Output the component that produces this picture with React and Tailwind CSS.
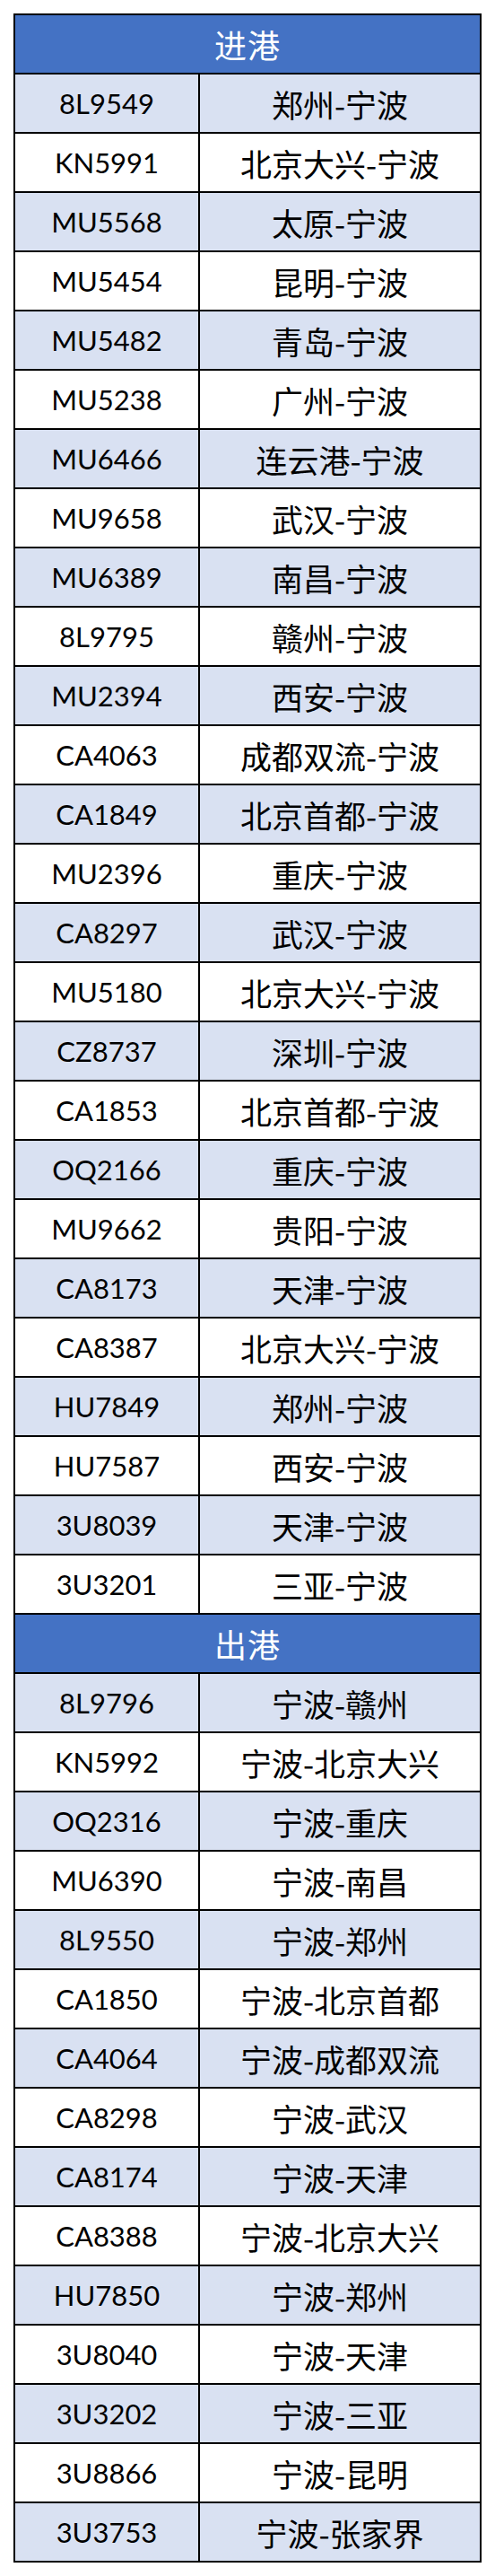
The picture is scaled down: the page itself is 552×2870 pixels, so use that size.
import React from "react";

const inbound = [
  ["8L9549", "郑州-宁波"],
  ["KN5991", "北京大兴-宁波"],
  ["MU5568", "太原-宁波"],
  ["MU5454", "昆明-宁波"],
  ["MU5482", "青岛-宁波"],
  ["MU5238", "广州-宁波"],
  ["MU6466", "连云港-宁波"],
  ["MU9658", "武汉-宁波"],
  ["MU6389", "南昌-宁波"],
  ["8L9795", "赣州-宁波"],
  ["MU2394", "西安-宁波"],
  ["CA4063", "成都双流-宁波"],
  ["CA1849", "北京首都-宁波"],
  ["MU2396", "重庆-宁波"],
  ["CA8297", "武汉-宁波"],
  ["MU5180", "北京大兴-宁波"],
  ["CZ8737", "深圳-宁波"],
  ["CA1853", "北京首都-宁波"],
  ["OQ2166", "重庆-宁波"],
  ["MU9662", "贵阳-宁波"],
  ["CA8173", "天津-宁波"],
  ["CA8387", "北京大兴-宁波"],
  ["HU7849", "郑州-宁波"],
  ["HU7587", "西安-宁波"],
  ["3U8039", "天津-宁波"],
  ["3U3201", "三亚-宁波"],
];

const outbound = [
  ["8L9796", "宁波-赣州"],
  ["KN5992", "宁波-北京大兴"],
  ["OQ2316", "宁波-重庆"],
  ["MU6390", "宁波-南昌"],
  ["8L9550", "宁波-郑州"],
  ["CA1850", "宁波-北京首都"],
  ["CA4064", "宁波-成都双流"],
  ["CA8298", "宁波-武汉"],
  ["CA8174", "宁波-天津"],
  ["CA8388", "宁波-北京大兴"],
  ["HU7850", "宁波-郑州"],
  ["3U8040", "宁波-天津"],
  ["3U3202", "宁波-三亚"],
  ["3U8866", "宁波-昆明"],
  ["3U3753", "宁波-张家界"],
];

const cjk = { fontFamily: '"Noto Sans CJK SC", "Noto Sans CJK JP", sans-serif' };

function Header({ title }) {
  return (
    <div className="h-[66px] border-b-2 border-black bg-[#4472C4] flex items-center justify-center">
      <span
        className="text-white text-[36px] leading-none tracking-[1px]"
        style={cjk}
      >
        {title}
      </span>
    </div>
  );
}

function Row({ code, route, shaded, last }) {
  return (
    <div
      className={
        "flex " +
        (last ? "h-[64px] " : "h-[66px] border-b-2 border-black ") +
        (shaded ? "bg-[#D9E1F2]" : "bg-white")
      }
    >
      <div className="w-[206px] border-r-2 border-black flex items-center justify-center">
        <span
          className="text-black text-[31px] leading-none"
          style={{ fontFamily: 'Lato, "Open Sans", sans-serif' }}
        >
          {code}
        </span>
      </div>
      <div className="flex-1 flex items-center justify-center">
        <span className="text-black text-[35px] leading-none" style={cjk}>
          {route}
        </span>
      </div>
    </div>
  );
}

export default function App() {
  return (
    <div className="w-[552px] bg-white p-[15px]">
      <div className="border-2 border-black">
        <Header title="进港" />
        {inbound.map(([c, r], i) => (
          <Row key={c + i} code={c} route={r} shaded={i % 2 === 0} />
        ))}
        <Header title="出港" />
        {outbound.map(([c, r], i) => (
          <Row
            key={c + i}
            code={c}
            route={r}
            shaded={i % 2 === 0}
            last={i === outbound.length - 1}
          />
        ))}
      </div>
    </div>
  );
}
